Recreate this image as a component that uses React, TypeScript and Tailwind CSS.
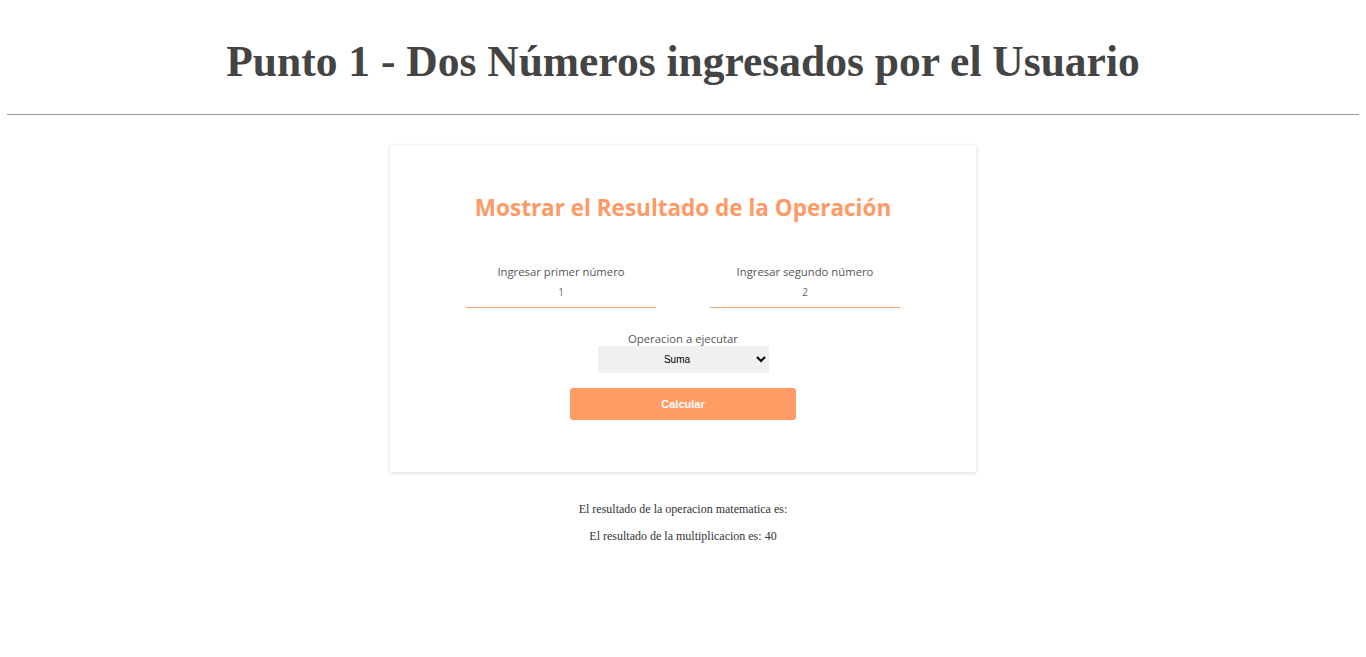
import { useState } from 'react';

export default function App() {
  const [a, setA] = useState('1');
  const [b, setB] = useState('2');
  const [op, setOp] = useState('suma');

  return (
    <div className="min-h-screen bg-white px-[7px] text-[#444]">
      <h1 className="pt-[31px] pb-[23px] text-center font-['Liberation_Serif',serif] text-[43.5px] font-bold leading-[60px] text-[#444]">
        Punto 1 - Dos Números ingresados por el Usuario
      </h1>
      <hr className="border-t border-[#999]" />

      <div className="mx-auto mt-[30px] w-[586px] bg-white pt-[46px] pb-[52px] shadow-[0_1px_4px_rgba(0,0,0,0.15)] font-['Open_Sans','Segoe_UI',sans-serif]">
        <h2 className="text-center text-[22.5px] font-bold leading-[34px] text-[#ff9966]">
          Mostrar el Resultado de la Operación
        </h2>

        <div className="mt-[38px] flex justify-center gap-[54px]">
          <label className="flex w-[190px] flex-col items-center">
            <span className="text-[11.3px] leading-[18px] text-[#555]">Ingresar primer número</span>
            <input
              value={a}
              onChange={(e) => setA(e.target.value)}
              className="h-[27px] w-full border-b border-[#f4a06c] pb-[5px] text-center text-[10px] text-[#666] outline-none"
            />
          </label>
          <label className="flex w-[190px] flex-col items-center">
            <span className="text-[11.3px] leading-[18px] text-[#555]">Ingresar segundo número</span>
            <input
              value={b}
              onChange={(e) => setB(e.target.value)}
              className="h-[27px] w-full border-b border-[#f4a06c] pb-[5px] text-center text-[10px] text-[#666] outline-none"
            />
          </label>
        </div>

        <div className="mt-[24px] flex flex-col items-center">
          <span className="text-[11.3px] leading-[14px] text-[#555]">Operacion a ejecutar</span>
          <select
            value={op}
            onChange={(e) => setOp(e.target.value)}
            className="h-[27px] w-[171px] bg-[#f0f0f0] text-center font-['Liberation_Sans',sans-serif] text-[10px] text-black outline-none"
          >
            <option value="suma">Suma</option>
            <option value="resta">Resta</option>
            <option value="multiplicacion">Multiplicacion</option>
            <option value="division">Division</option>
          </select>
          <button className="mt-[15px] h-[32px] w-[226px] rounded-[3px] bg-[#ff9c66] font-['Liberation_Sans',sans-serif] text-[11px] font-bold text-white">
            Calcular
          </button>
        </div>
      </div>

      <div className="mt-[30px] text-center font-['Liberation_Serif',serif] text-[12px] leading-[14px] text-[#333]">
        <p>El resultado de la operacion matematica es:</p>
        <p className="mt-[13px]">El resultado de la multiplicacion es: 40</p>
      </div>
    </div>
  );
}
